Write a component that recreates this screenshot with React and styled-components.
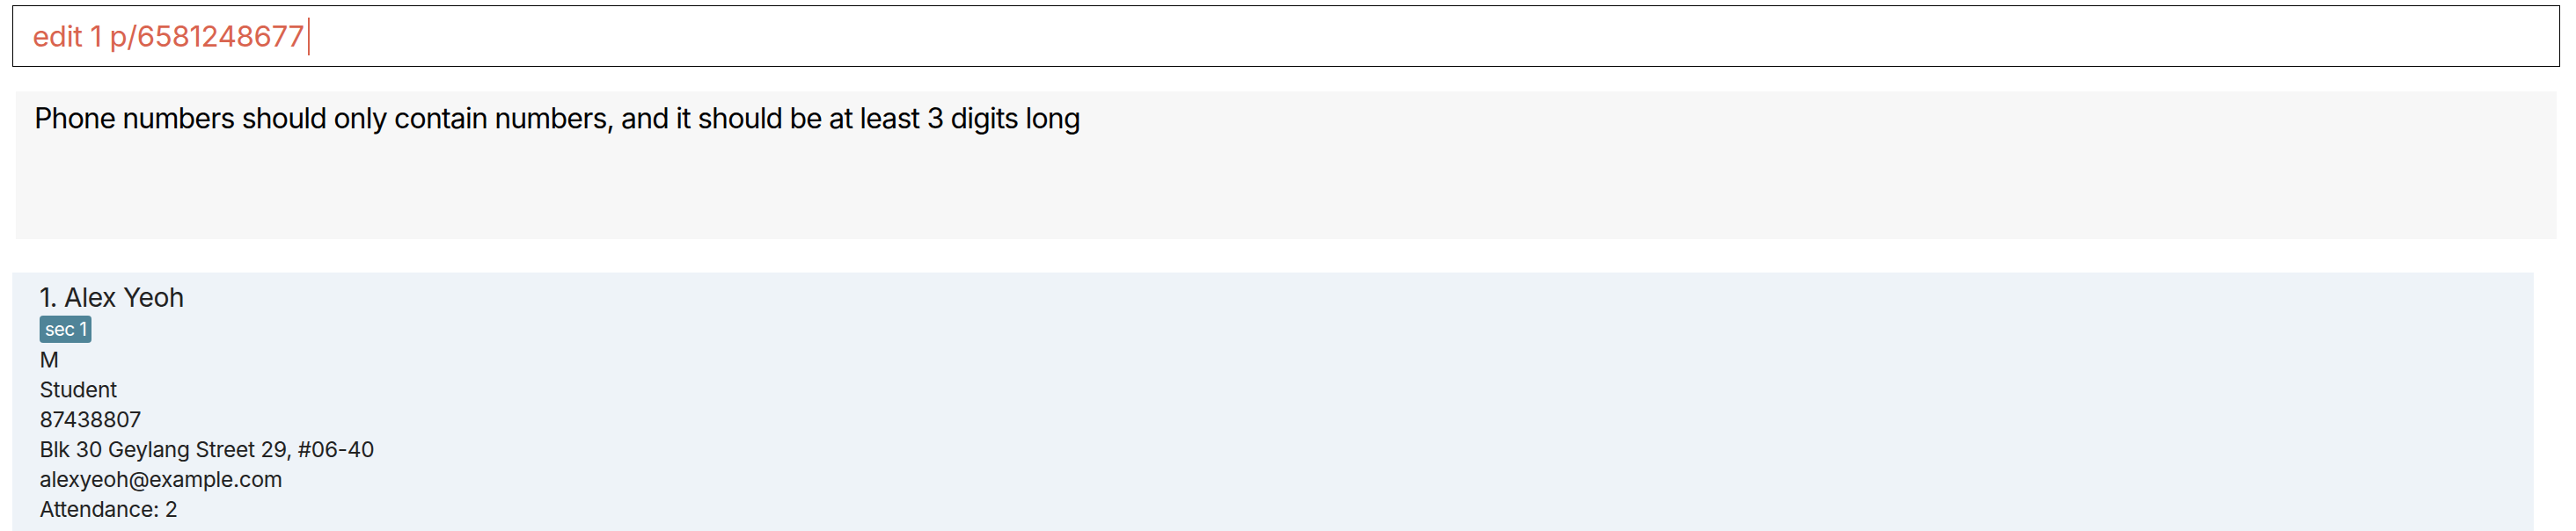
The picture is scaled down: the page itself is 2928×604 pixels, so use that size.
import React from "react";
import styled, { createGlobalStyle } from "styled-components";

const GlobalStyle = createGlobalStyle`
  html, body {
    margin: 0;
    padding: 0;
    background: #fff;
  }
  body {
    font-family: Inter, "Noto Sans", "Liberation Sans", sans-serif;
    -webkit-font-smoothing: antialiased;
  }
`;

const Page = styled.div`
  display: flex;
  flex-direction: column;
  width: 2928px;
  height: 604px;
  overflow: hidden;
  box-sizing: border-box;
  padding-top: 6px;
`;

const CommandBox = styled.div`
  display: flex;
  align-items: center;
  height: 70px;
  margin: 0 18px 0 14px;
  padding-left: 22px;
  box-sizing: border-box;
  border: 1px solid #000;
  background: #fff;
  color: #d9644f;
  font-size: 33px;
  letter-spacing: -0.4px;
`;

const Caret = styled.span`
  display: inline-block;
  width: 2px;
  height: 43px;
  margin-left: 4px;
  background: #d9644f;
`;

const ResultBox = styled.div`
  height: 168px;
  margin: 28px 22px 0 18px;
  padding: 10px 21px;
  box-sizing: border-box;
  background: #f7f7f7;
  color: #000;
  font-size: 32px;
  letter-spacing: -0.82px;
  line-height: 1.3;
`;

const PersonCard = styled.div`
  display: flex;
  flex-direction: column;
  align-items: flex-start;
  margin: 38px 48px 0 14px;
  padding: 8px 31px 0;
  flex: 1;
  background: #eef3f8;
  color: #222;
`;

const Name = styled.div`
  font-size: 30px;
  line-height: 40px;
  letter-spacing: -0.5px;
`;

const Tags = styled.div`
  display: flex;
  gap: 6px;
  margin: 1px 0 2px;
`;

const Tag = styled.span`
  display: inline-block;
  padding: 0 6px;
  height: 31px;
  line-height: 31px;
  border-radius: 4px;
  background: ${(p) => p.color || "#4f8498"};
  color: #fff;
  font-size: 21px;
  letter-spacing: -0.5px;
`;

const Detail = styled.div`
  font-size: 24.5px;
  line-height: 34px;
  letter-spacing: -0.3px;
`;

const person = {
  index: 1,
  name: "Alex Yeoh",
  tags: ["sec 1"],
  details: [
    "M",
    "Student",
    "87438807",
    "Blk 30 Geylang Street 29, #06-40",
    "alexyeoh@example.com",
    "Attendance: 2",
  ],
};

export default function App() {
  return (
    <>
      <GlobalStyle />
      <Page>
        <CommandBox>
          edit 1 p/6581248677
          <Caret />
        </CommandBox>
        <ResultBox>
          Phone numbers should only contain numbers, and it should be at least 3 digits long
        </ResultBox>
        <PersonCard>
          <Name>
            {person.index}. {person.name}
          </Name>
          <Tags>
            {person.tags.map((t) => (
              <Tag key={t}>{t}</Tag>
            ))}
          </Tags>
          {person.details.map((d) => (
            <Detail key={d}>{d}</Detail>
          ))}
        </PersonCard>
      </Page>
    </>
  );
}
